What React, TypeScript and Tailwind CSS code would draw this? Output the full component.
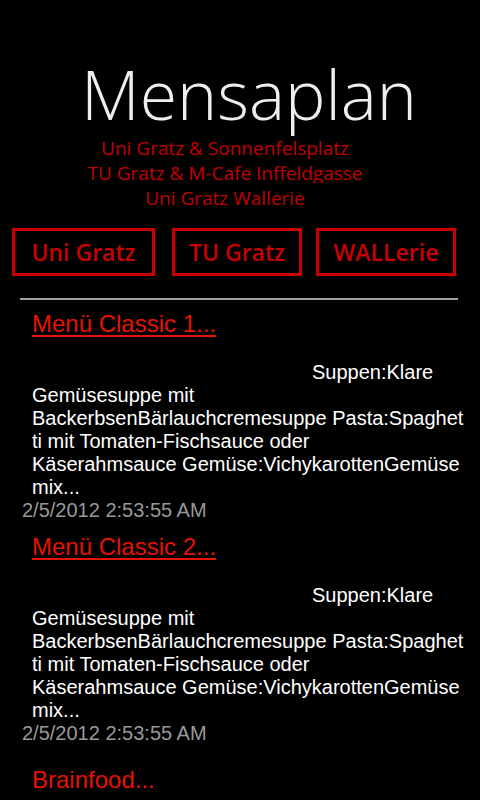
const body = [
  "Gemüsesuppe mit",
  "BackerbsenBärlauchcremesuppe Pasta:Spaghet",
  "ti mit Tomaten-Fischsauce oder",
  "Käserahmsauce Gemüse:VichykarottenGemüse",
  "mix...",
];

function MenuItem({ title }: { title: string }) {
  return (
    <div className="mt-[10px]">
      <a href="#" className="block pl-[32px] h-[28px] text-[24px] leading-[28px] text-[#e51400] underline underline-offset-[3px]">
        {title}
      </a>
      <div className="mt-[23px] text-[20px] leading-[23px] text-white">
        <div className="pl-[312px]">Suppen:Klare</div>
        {body.map((line) => (
          <div key={line} className="pl-[32px] whitespace-nowrap">
            {line}
          </div>
        ))}
      </div>
      <div className="pl-[22px] text-[20px] leading-[23px] text-[#999999]">2/5/2012 2:53:55 AM</div>
    </div>
  );
}

function App() {
  return (
    <div className="w-[480px] h-[800px] overflow-hidden bg-black font-['Liberation_Sans',Arial,sans-serif]">
      <header className="pt-[59px]">
        <h1 className="pl-[81px] text-[68px] leading-[70px] font-light text-[#eeeeee] font-['Open_Sans',sans-serif]">
          Mensaplan
        </h1>

        <div className="mt-[7px] w-[450px] text-center text-[19px] text-[#c00000] font-['Open_Sans',sans-serif]">
          <div className="h-[25px] leading-[25px]">Uni Gratz &amp; Sonnenfelsplatz</div>
          <div className="h-[22px] mb-[3px] leading-[25px] overflow-hidden">TU Gratz &amp; M-Cafe Inffeldgasse</div>
          <div className="h-[25px] leading-[25px]">Uni Gratz Wallerie</div>
        </div>
      </header>

      <div className="mt-[17px] flex pl-[12px] font-['Open_Sans',sans-serif] text-[23px] font-semibold text-[#c80000]">
        <button className="w-[143px] h-[48px] border-[3px] border-[#cc0000] flex items-center justify-center">Uni Gratz</button>
        <button className="ml-[17px] w-[130px] h-[48px] border-[3px] border-[#cc0000] flex items-center justify-center">TU Gratz</button>
        <button className="ml-[14px] w-[140px] h-[48px] border-[3px] border-[#cc0000] flex items-center justify-center">WALLerie</button>
      </div>

      <div className="mt-[22px] ml-[20px] w-[438px] h-[2px] bg-[#a0a0a0]" />

      <MenuItem title="Menü Classic 1..." />
      <div className="mt-[11px]" />
      <MenuItem title="Menü Classic 2..." />

      <div className="mt-[21px] pl-[32px] text-[24px] leading-[28px] text-[#e51400]">Brainfood...</div>
    </div>
  );
}

export default App;
